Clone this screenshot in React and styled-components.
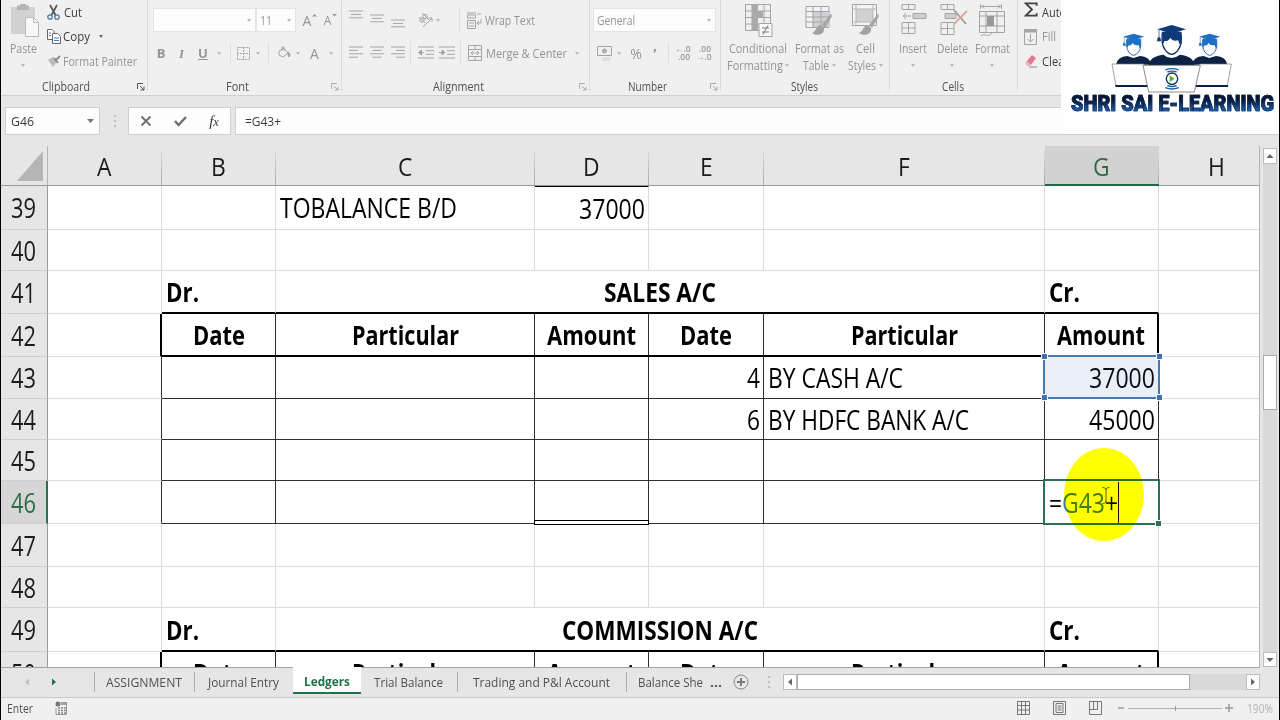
import styled, { createGlobalStyle, css } from 'styled-components';
import { useLayoutEffect, useRef, useState } from 'react';

const GlobalStyle = createGlobalStyle`
    * { box-sizing: border-box; }
    body {
        margin: 0;
        background: #000;
        overflow: hidden;
        font-family: "Open Sans", "Noto Sans", sans-serif;
    }
    svg { display: block; flex: none; }
`

const FitBox = styled.span`
    display: flex;
    flex: none;
    white-space: pre;
    margin-left: ${(props) => props.$ml || 0}px;
`

const FitInner = styled.span`
    flex: none;
    transform-origin: left center;
`

// Squeezes a line of text to a given width (or by a given ratio)
function Fit({ w, ratio = 0.85, ml, children }) {
    const ref = useRef(null);
    const [natural, setNatural] = useState(0);

    useLayoutEffect(() => {
        setNatural(parseFloat(getComputedStyle(ref.current).width));
    }, [children]);

    const width = w ?? natural * ratio;
    return (
        <FitBox $ml={ml} style={natural ? { width } : undefined}>
            <FitInner ref={ref} style={natural ? { transform: `scaleX(${width / natural})` } : undefined}>
                {children}
            </FitInner>
        </FitBox>
    );
}

const Window = styled.div`
    position: relative;
    display: flex;
    flex-direction: column;
    width: 1280px;
    height: 720px;
    border-left: 1px solid #000;
    border-right: 1px solid #000;
    background: #e6e6e6;
    overflow: hidden;
`

/* ---------- ribbon ---------- */

const Ribbon = styled.div`
    display: flex;
    flex: none;
    height: 96px;
    background: #f0f0f0;
    border-bottom: 1px solid #d0d0d0;
    font-size: 12px;
    line-height: 17px;
    color: #949494;
`

const Group = styled.section`
    display: flex;
    flex-direction: column;
    flex: none;
    width: ${(props) => props.$w}px;
    height: 95px;
    overflow: hidden;
    background: linear-gradient(#dadada, #dadada) 100% 0 / 1px 91px no-repeat;
`

const GroupBody = styled.div`
    display: flex;
    flex-direction: ${(props) => (props.$column ? 'column' : 'row')};
    flex: none;
    height: 78px;
    padding-left: ${(props) => props.$pl || 0}px;
`

const GroupFooter = styled.div`
    display: flex;
    align-items: center;
    flex: none;
    height: 17px;
    color: #505050;
    padding-left: ${(props) => props.$pl}px;
    padding-right: 3px;
`

const Launcher = styled.svg`
    margin-left: auto;
    stroke: ${(props) => (props.$on ? '#555' : '#aaa')};
`

const Stack = styled.div`
    display: flex;
    flex-direction: column;
    margin-left: ${(props) => props.$ml || 0}px;
`

const SmallButton = styled.div`
    display: flex;
    align-items: center;
    flex: none;
    height: 24.6px;
    color: ${(props) => (props.$on ? '#3c3c3c' : '#949494')};
`

const ToolRow = styled.div`
    display: flex;
    align-items: center;
    flex: none;
    height: 24px;
    margin-top: 8px;

    & + & {
        margin-top: 9px;
    }
`

const BigButton = styled.div`
    display: flex;
    flex-direction: column;
    align-items: center;
    flex: none;
    width: ${(props) => props.$w}px;
    padding-top: 4px;
    margin-left: ${(props) => props.$ml || 0}px;
`

const BigIcon = styled.div`
    height: 36px;
`

const Line = styled.div`
    display: flex;
    align-items: center;
    height: 17px;
`

const Select = styled.div`
    display: flex;
    align-items: center;
    justify-content: space-between;
    flex: none;
    width: ${(props) => props.$w}px;
    height: 24px;
    padding: 0 4px 0 3px;
    background: #fdfdfd;
    border: 1px solid #e4e4e4;
`

const CaretShape = styled.i`
    flex: none;
    width: 0;
    height: 0;
    margin-left: ${(props) => props.$ml || 0}px;
    border: 2.5px solid transparent;
    border-top: 3px solid ${(props) => (props.$on ? '#666' : '#b8b8b8')};
    border-bottom: 0;
`

const Bar = styled.i`
    flex: none;
    width: 1px;
    height: ${(props) => props.$h || 20}px;
    margin-left: ${(props) => props.$ml || 0}px;
    background: #dedede;
`

const Glyph = styled.span`
    flex: none;
    width: ${(props) => props.$w}px;
    margin-left: ${(props) => props.$ml || 0}px;
    font-size: ${(props) => props.$size || 13}px;
    font-weight: ${(props) => (props.$bold ? 700 : 400)};
    font-style: ${(props) => (props.$italic ? 'italic' : 'normal')};
    font-family: ${(props) => (props.$serif ? '"Liberation Serif", serif' : 'inherit')};
    text-decoration: ${(props) => (props.$underline ? 'underline' : 'none')};
    text-align: center;
`

const Icon = styled.svg`
    margin-left: ${(props) => props.$ml || 0}px;
    margin-top: ${(props) => props.$mt || 0}px;
    fill: none;
    stroke: #a4a4a4;
    overflow: visible;
`

const LaunchIcon = ({ on }) => (
    <Launcher $on={on} width="8" height="8" viewBox="0 0 8 8" fill="none">
        <path d="M.5 6V.5H6M3 3l4 4M7 3.5V7H3.5" />
    </Launcher>
);

const Lines = ({ rows, ml, mt }) => (
    <Icon $ml={ml} $mt={mt} width="14" height={rows.length * 3.4}>
        {rows.map(([a, b], i) => (
            <path key={i} d={`M${a} ${i * 3.4 + 1}H${b}`} />
        ))}
    </Icon>
);

const LEFT = [[0, 14], [0, 9], [0, 14], [0, 9]];
const CENTER = [[0, 14], [2.5, 11.5], [0, 14], [2.5, 11.5]];
const RIGHT = [[0, 14], [5, 14], [0, 14], [5, 14]];
const SHORT = [[0, 14], [2, 12], [0, 14]];

const IndentIcon = ({ ml, flip }) => (
    <Icon $ml={ml} width="16" height="14">
        <path d="M0 1H16M8 4.7H16M8 8.3H16M0 12H16" />
        <path d={flip ? 'M0 6.5H5M3 4l3 2.5L3 9z' : 'M6 6.5H1M3.5 4l-3 2.5 3 2.5z'} fill="#a4a4a4" />
    </Icon>
);

const Clipboard = () => (
    <Group $w={147}>
        <GroupBody $pl={3}>
            <BigButton $w={38}>
                <BigIcon>
                    <Icon $ml={4} width="28" height="34" viewBox="0 0 28 34">
                        <path d="M0 3h24v27H0z" fill="#d2d2d2" stroke="none" />
                        <path d="M6 1.5h12V6H6zM9 0h6v3H9z" fill="#b4b4b4" stroke="none" />
                        <path d="M14.5 13.5h8l5 5v14h-13z" fill="#f8f8f8" stroke="#bababa" />
                        <path d="M22.5 13.5v5h5" stroke="#bababa" />
                    </Icon>
                </BigIcon>
                <Line><Fit w={27}>Paste</Fit></Line>
                <Line><CaretShape /></Line>
            </BigButton>
            <Stack $ml={5}>
                <SmallButton $on>
                    <Icon width="13" height="15" viewBox="0 0 13 15">
                        <path d="M3 0l5.5 10M10 0L4.5 10" stroke="#555" strokeWidth="1.7" />
                        <circle cx="3" cy="12" r="2.2" stroke="#4d7aa3" strokeWidth="1.3" />
                        <circle cx="10" cy="12" r="2.2" stroke="#4d7aa3" strokeWidth="1.3" />
                    </Icon>
                    <Fit w={18} ml={4}>Cut</Fit>
                </SmallButton>
                <SmallButton $on>
                    <Icon width="14" height="15" viewBox="0 0 14 15">
                        <path d="M.5.5H5l2 2v8H.5z" fill="#fff" stroke="#666" />
                        <path d="M5.5 4.5h5l3 3v7h-8z" fill="#fff" stroke="#666" />
                        <path d="M2 4h2M2 6.5h2M7 9h5M7 11.5h5" stroke="#4d7aa3" />
                    </Icon>
                    <Fit w={27} ml={2}>Copy</Fit>
                    <CaretShape $on $ml={9} />
                </SmallButton>
                <SmallButton>
                    <Icon width="14" height="13" viewBox="0 0 14 13">
                        <path d="M1 5l5-3 4 5-4 5z" fill="#bdbdbd" stroke="none" />
                        <path d="M8 6l5-5M7 3l4 5" stroke="#8c8c8c" strokeWidth="2" />
                    </Icon>
                    <Fit w={74} ml={2}>Format Painter</Fit>
                </SmallButton>
            </Stack>
        </GroupBody>
        <GroupFooter $pl={41}><Fit w={48}>Clipboard</Fit><LaunchIcon on /></GroupFooter>
    </Group>
);

const Font = () => (
    <Group $w={194}>
        <GroupBody $pl={5} $column>
            <ToolRow>
                <Select $w={103}><span /><CaretShape /></Select>
                <Select $w={40}><Fit w={12}>11</Fit><CaretShape /></Select>
                <Glyph $ml={6} $w={10} $size={14}>A</Glyph>
                <Icon $mt={-10} width="5" height="4"><path d="M0 3.5L2.5 1 5 3.5z" fill="#999" stroke="none" /></Icon>
                <Glyph $ml={6} $w={9} $size={12}>A</Glyph>
                <Icon $mt={-10} width="5" height="4"><path d="M0 1h5L2.5 3.5z" fill="#999" stroke="none" /></Icon>
            </ToolRow>
            <ToolRow>
                <Glyph $ml={3} $w={10} $bold>B</Glyph>
                <Glyph $ml={11} $w={9} $italic $serif $bold>I</Glyph>
                <Glyph $ml={12} $w={10} $bold $underline>U</Glyph>
                <CaretShape $ml={9} />
                <Bar $ml={9} />
                <Icon $ml={6} width="13" height="13"><path d="M.5.5h12v12H.5zM6.5 0v13M0 6.5h13" strokeDasharray="2 1" /></Icon>
                <CaretShape $ml={6} />
                <Bar $ml={8} />
                <Icon $ml={8} width="14" height="14" viewBox="0 0 14 14">
                    <path d="M2 5l5-3 4 5-5 4-4-2zM5 5V1h2v4" />
                    <path d="M11 6c3 2 2 4 1 5-1-1-1-3-1-5z" fill="#a4a4a4" />
                </Icon>
                <CaretShape $ml={5} />
                <Glyph $ml={9} $w={11} $size={14}>A</Glyph>
                <CaretShape $ml={9} />
            </ToolRow>
        </GroupBody>
        <GroupFooter $pl={78}><Fit w={23}>Font</Fit><LaunchIcon /></GroupFooter>
    </Group>
);

const Alignment = () => (
    <Group $w={248}>
        <GroupBody $pl={7} $column>
            <ToolRow>
                <Lines rows={SHORT} mt={-10} />
                <Lines rows={SHORT} ml={7} mt={-2} />
                <Lines rows={SHORT} ml={7} mt={9} />
                <Icon $ml={13} width="16" height="16" viewBox="0 0 16 16">
                    <circle cx="4" cy="8" r="2.2" /><circle cx="7" cy="4.5" r="2.2" />
                    <path d="M1 5l6 6M4 1l7 7M5 15L14 6M14 6h-3.5M14 6v3.5" />
                </Icon>
                <CaretShape $ml={2} />
                <Bar $ml={19} $h={24} />
                <Icon $ml={7} width="15" height="17" viewBox="0 0 15 17">
                    <path d="M0 1h9M.5 3h8v3h-8zM.5 8.5h8v8h-8zM2 11h5M2 14h5M10 2h4M14 7v4h-4M12 9l-2 2 2 2" />
                </Icon>
                <Fit w={50} ml={3}>Wrap Text</Fit>
            </ToolRow>
            <ToolRow>
                <Lines rows={LEFT} />
                <Lines rows={CENTER} ml={7} />
                <Lines rows={RIGHT} ml={7} />
                <Bar $ml={5} $h={24} />
                <IndentIcon ml={7} />
                <IndentIcon ml={5} flip />
                <Bar $ml={5} $h={24} />
                <Icon $ml={7} width="14" height="16" viewBox="0 0 14 16">
                    <path d="M.5.5h13v15H.5zM.5 4.5h13M.5 11.5h13M7 .5v4M7 11.5v4M3 8h8M5 6L3 8l2 2M9 6l2 2-2 2" />
                </Icon>
                <Fit w={81} ml={4}>{'Merge & Center'}</Fit>
                <CaretShape $ml={8} />
            </ToolRow>
        </GroupBody>
        <GroupFooter $pl={91}><Fit w={51}>Alignment</Fit><LaunchIcon /></GroupFooter>
    </Group>
);

const Digits = styled.span`
    display: flex;
    flex-direction: column;
    flex: none;
    width: 15px;
    margin-left: ${(props) => props.$ml}px;
    font-size: 8.5px;
    font-weight: 600;
    line-height: 8px;
    text-align: right;
    white-space: nowrap;
`

const NumberGroup = () => (
    <Group $w={131}>
        <GroupBody $pl={3} $column>
            <ToolRow>
                <Select $w={123}><Fit w={38}>General</Fit><CaretShape /></Select>
            </ToolRow>
            <ToolRow>
                <Icon $ml={4} width="16" height="16" viewBox="0 0 16 16">
                    <path d="M.5 1.5h14v9H.5z" />
                    <circle cx="7.5" cy="6" r="2" fill="#b5b5b5" />
                    <path d="M6 13h8M5 15h8" stroke="#ccc" />
                </Icon>
                <CaretShape $ml={4} />
                <Glyph $ml={8} $w={14} $size={14}>%</Glyph>
                <Glyph $ml={8} $w={8} $size={15} $bold>’</Glyph>
                <Bar $ml={9} />
                <Digits $ml={6}><span>←.0</span><span>.00</span></Digits>
                <Digits $ml={6}><span>.00</span><span>→.0</span></Digits>
            </ToolRow>
        </GroupBody>
        <GroupFooter $pl={38}><Fit w={39}>Number</Fit><LaunchIcon /></GroupFooter>
    </Group>
);

const Brush = () => (
    <>
        <path d="M26 9.500L17 21l3 3 7-12z" fill="#a6a6a6" stroke="none" />
        <path d="M16 21c-5 0-4 6-9 8 6 4 13 1 12-5z" fill="#a2a2a2" stroke="none" />
    </>
);

const Styles = () => (
    <Group $w={169}>
        <GroupBody $pl={5}>
            <BigButton $w={64}>
                <BigIcon>
                    <Icon $ml={2} width="28" height="34" viewBox="0 0 28 34">
                        <path d="M.5.5h25v26H.5zM.5 7h25M.5 13.5h25M.5 20h25M7 .5v26M19 .5v26" />
                        <path d="M7 .5h6v26H7zM13 7h5v6h-5z" fill="#aaa" stroke="none" />
                        <path d="M14 19.5h13v13H14z" fill="#f8f8f8" />
                        <path d="M17 24h7M17 28h7M23 21.5l-5 9" stroke="#777" />
                    </Icon>
                </BigIcon>
                <Line><Fit w={58}>Conditional</Fit></Line>
                <Line><Fit w={56}>Formatting</Fit><CaretShape $ml={2} /></Line>
            </BigButton>
            <BigButton $w={52} $ml={3}>
                <BigIcon>
                    <Icon width="28" height="34" viewBox="0 0 28 34">
                        <path d="M1 2.5h23v21H1z" fill="#f4f4f4" />
                        <path d="M8 8h16v15H8z" fill="#d0d0d6" stroke="none" />
                        <path d="M1 7.5h23M1 13h23M1 18h23M8 2.5v21M16 2.5v21" />
                        <Brush />
                    </Icon>
                </BigIcon>
                <Line><Fit w={49}>Format as</Fit></Line>
                <Line><Fit w={26}>Table</Fit><CaretShape $ml={3} /></Line>
            </BigButton>
            <BigButton $w={40}>
                <BigIcon>
                    <Icon $ml={2} width="28" height="34" viewBox="0 0 28 34">
                        <path d="M.5.5h24v21H.5z" fill="#f4f4f4" />
                        <path d="M4 5h17v13H4z" fill="#d0d0d6" stroke="none" />
                        <path d="M.5 5h24M4 .5v21M.5 18h24M21 .5v21" stroke="#b8b8b8" />
                        <Brush />
                    </Icon>
                </BigIcon>
                <Line><Fit w={19}>Cell</Fit></Line>
                <Line><Fit w={28}>Styles</Fit><CaretShape $ml={3} /></Line>
            </BigButton>
        </GroupBody>
        <GroupFooter $pl={70}><Fit w={27}>Styles</Fit></GroupFooter>
    </Group>
);

const Cells = () => (
    <Group $w={128}>
        <GroupBody $pl={7}>
            <BigButton $w={32}>
                <BigIcon>
                    <Icon $ml={2} width="26" height="32" viewBox="0 0 26 32">
                        <path d="M1 .5h13v5H1zM7.5 .5v5M1 18.5h13v11H1zM7.5 18.5v11M1 24h13" />
                        <path d="M12 9.5h13v5H12z" fill="#cfcfcf" />
                        <path d="M10 12H2M5 9l-3 3 3 3" />
                    </Icon>
                </BigIcon>
                <Line><Fit w={28}>Insert</Fit></Line>
                <Line><CaretShape /></Line>
            </BigButton>
            <BigButton $w={34} $ml={6}>
                <BigIcon>
                    <Icon $ml={2} width="27" height="32" viewBox="0 0 27 32">
                        <path d="M1 .5h13v5H1zM7.5 .5v5M1 18.5h13v12H1zM7.5 18.5v12M1 24.5h13" />
                        <path d="M5 9.5h11v5H5z" fill="#cfcfcf" />
                        <path d="M14 6l12 14" stroke="#999" strokeWidth="1.8" />
                        <path d="M27 7L14 20" stroke="#dba9a2" strokeWidth="1.8" />
                    </Icon>
                </BigIcon>
                <Line><Fit w={31}>Delete</Fit></Line>
                <Line><CaretShape /></Line>
            </BigButton>
            <BigButton $w={38} $ml={4}>
                <BigIcon>
                    <Icon width="26" height="34" viewBox="0 0 26 34" >
                        <path d="M1.5 0v5M22.5 0v5M2 2.5h20M5 .5L3 2.5l2 2M19 .5l2 2-2 2" />
                        <path d="M.5 7.5h25v21H.5zM.5 12h25M.5 22h25M7 7.5v21M18 7.5v21" />
                        <path d="M8 12h7v10H8z" fill="#999" stroke="none" />
                        <path d="M2 32c4-4 6 3 11-3" />
                    </Icon>
                </BigIcon>
                <Line><Fit w={35}>Format</Fit></Line>
                <Line><CaretShape /></Line>
            </BigButton>
        </GroupBody>
        <GroupFooter $pl={52}><Fit w={22}>Cells</Fit></GroupFooter>
    </Group>
);

const Editing = () => (
    <Group $w={100}>
        <GroupBody $pl={6}>
            <Stack>
                <SmallButton $on>
                    <Icon $mt={-4} width="14" height="16" viewBox="0 0 14 17">
                        <path d="M13 4V1.5H1.5L8 8l-6.5 6.5H13V12" stroke="#444" strokeWidth="2" />
                    </Icon>
                    <Fit w={47} ml={4}>AutoSum</Fit>
                </SmallButton>
                <SmallButton>
                    <Icon width="13" height="16" viewBox="0 0 13 16">
                        <path d="M.5.5h12v15H.5zM.5 3h12M6.5 5v8M3.5 10l3 3 3-3" />
                        <path d="M.5.5h12v2H.5z" fill="#aaa" />
                    </Icon>
                    <Fit w={14} ml={5}>Fill</Fit>
                    <CaretShape $ml={5} />
                </SmallButton>
                <SmallButton $on>
                    <Icon width="14" height="14" viewBox="0 0 14 14">
                        <path d="M2 8l6-7 4 3-5 7z" fill="#e3798f" stroke="none" />
                        <path d="M1 9l2-2 4 4-1 1H3z" fill="#f2b9c4" stroke="none" />
                        <path d="M5 13h8" stroke="#888" />
                    </Icon>
                    <Fit w={27} ml={4}>Clear</Fit>
                </SmallButton>
            </Stack>
        </GroupBody>
    </Group>
);

/* ---------- formula bar ---------- */

const FormulaRow = styled.div`
    display: flex;
    align-items: center;
    flex: none;
    height: 50px;
    padding: 0 0 0 4px;
    font-size: 12px;
    color: #3c3c3c;
`

const Field = styled.div`
    display: flex;
    align-items: center;
    flex: ${(props) => (props.$w ? 'none' : '1')};
    width: ${(props) => props.$w}px;
    height: 28px;
    margin-left: ${(props) => props.$ml || 0}px;
    padding: 0 ${(props) => props.$pr || 0}px 0 ${(props) => props.$pl || 0}px;
    justify-content: ${(props) => (props.$between ? 'space-between' : 'flex-start')};
    background: #fdfdfd;
    border: 1px solid #cfcfcf;
`

const Dots = styled.i`
    flex: none;
    width: 2px;
    height: 12px;
    margin-left: ${(props) => props.$ml}px;
    background: repeating-linear-gradient(#bdbdbd 0 2px, transparent 2px 5px);
`

/* ---------- sheet ---------- */

const Main = styled.div`
    display: flex;
    flex: none;
    height: 521px;
`

const Sheet = styled.div`
    width: 1259px;
    flex: none;
    height: 521px;
    overflow: hidden;
    border-right: 1px solid #b4b4b4;
`

const Row = styled.div`
    display: flex;
    height: ${(props) => props.$h}px;
`

const HeadCell = styled.div`
    position: relative;
    display: flex;
    align-items: center;
    justify-content: center;
    flex: none;
    width: ${(props) => props.$w}px;
    padding-top: 1px;
    padding-right: 1px;
    font-size: 26px;
    line-height: 32px;
    color: ${(props) => (props.$active ? '#2f6b48' : '#1c1c1c')};
    background: ${(props) => (props.$active ? '#d2d2d2' : 'transparent')};
    border-bottom: ${(props) => (props.$active ? '2px solid #1f6a45' : '1px solid #9a9a9a')};

    &::after {
        content: '';
        position: absolute;
        right: 0;
        top: 5px;
        bottom: 0;
        width: 1px;
        background: linear-gradient(#dadada, #a8a8a8);
    }
`

const RowHead = styled.div`
    display: flex;
    align-items: center;
    justify-content: center;
    flex: none;
    width: 47px;
    padding: 1px 1px 0 0;
    font-size: 26.5px;
    line-height: 32px;
    color: ${(props) => (props.$active ? '#2f6b48' : '#1c1c1c')};
    background: ${(props) => (props.$active ? '#d6d6d6' : '#e6e6e6')};
    border-right: ${(props) => (props.$active ? '2px solid #2b7350' : '1px solid #9a9a9a')};
    border-bottom: 1px solid #cfcfcf;
    overflow: hidden;
`

const edge = (v) => (v === 2 ? '2px solid #000' : v === 1 ? '1px solid #2e2e2e' : v === 'none' ? '0' : '1px solid #dcdcdc')

const Cell = styled.div`
    position: relative;
    display: flex;
    align-items: center;
    flex: none;
    justify-content: ${(props) => props.$align || 'flex-start'};
    width: ${(props) => props.$w}px;
    padding: 1px ${(props) => (props.$align === 'end' ? 3 : 4)}px 0 4px;
    background: #fff;
    border-right: ${(props) => edge(props.$right)};
    border-bottom: ${(props) => edge(props.$bottom)};
    font-size: 27px;
    line-height: 36px;
    font-weight: ${(props) => (props.$bold ? 700 : 400)};
    color: #000;
    ${(props) => props.$topped && css`border-top: 1px solid #000;`}
    ${(props) => props.$double && css`
        &::after {
            content: '';
            position: absolute;
            left: -1px;
            right: -1px;
            bottom: -2px;
            height: 3px;
            z-index: 1;
            background: #fff;
            border: 1px solid #000;
        }
    `}
`

const RangeBox = styled.div`
    position: absolute;
    left: -2px;
    right: -2px;
    top: -2px;
    bottom: -1px;
    z-index: 2;
    border: 2px solid #4579b4;
    background: rgba(68, 125, 196, 0.12);
`

const Knob = styled.i`
    position: absolute;
    width: 5px;
    height: 5px;
    background: #3b73b4;
    outline: 1px solid #fff;
    ${(props) => (props.$r ? 'right: -4px;' : 'left: -3px;')}
    ${(props) => (props.$b ? 'bottom: -3px;' : 'top: -3px;')}
`

const EditBox = styled.div`
    position: absolute;
    left: -2px;
    right: -2px;
    top: -2px;
    bottom: -2px;
    z-index: 2;
    border: 2px solid #2b7350;

    &::after {
        content: '';
        position: absolute;
        right: -3px;
        bottom: -3px;
        width: 5px;
        height: 5px;
        background: #2b7350;
        border: solid #fff;
        border-width: 1px 0 0 1px;
    }
`

const Ref = styled.span`
    color: #3f7fb8;
`

const TextCaret = styled.i`
    align-self: stretch;
    width: 1px;
    background: #111;
`

const Spot = styled.div`
    position: absolute;
    left: 19px;
    top: -33px;
    width: 80px;
    height: 93px;
    z-index: 3;
    border-radius: 50%;
    background: #ffff00;
    mix-blend-mode: multiply;
    filter: blur(0.7px);
`

const Beam = styled.svg`
    position: absolute;
    left: 57px;
    top: 6px;
    z-index: 4;
    fill: none;
    stroke: #6b5a12;
`

const COLS = { A: 114, B: 114, C: 259, D: 114, E: 115, F: 281, G: 114, H: 115 };
const LETTERS = Object.keys(COLS);
const HEADS = { B: ['Date', 52], C: ['Particular', 107], D: ['Amount', 89], E: ['Date', 52], F: ['Particular', 107], G: ['Amount', 88] };

const ROWS = [
    { n: 39, h: 44, values: { C: ['TOBALANCE B/D', 177], D: ['37000', 66, 'end'] } },
    { n: 40, h: 41 },
    { n: 41, h: 43, title: ['SALES A/C', 112] },
    { n: 42, h: 43, heads: true },
    { n: 43, h: 42, boxed: true, values: { E: ['4', 13, 'end'], F: ['BY CASH A/C', 135], G: ['37000', 66, 'end'] } },
    { n: 44, h: 41, boxed: true, values: { E: ['6', 13, 'end'], F: ['BY HDFC BANK A/C', 201], G: ['45000', 66, 'end'] } },
    { n: 45, h: 41, boxed: true },
    { n: 46, h: 43, boxed: true },
    { n: 47, h: 43 },
    { n: 48, h: 41 },
    { n: 49, h: 44, title: ['COMMISSION A/C', 196] },
    { n: 50, h: 43, heads: true },
];

function TitleRow({ title }) {
    return (
        <>
            <Cell $w={COLS.A} />
            <Cell $w={COLS.B} $bottom={2} $bold><Fit w={33}>Dr.</Fit></Cell>
            <Cell $w={COLS.C + COLS.D + COLS.E + COLS.F} $bottom={2} $bold $align="center">
                <Fit w={title[1]}>{title[0]}</Fit>
            </Cell>
            <Cell $w={COLS.G} $bottom={2} $bold><Fit w={31}>Cr.</Fit></Cell>
            <Cell $w={COLS.H} $right="none" />
        </>
    );
}

function DataCell({ row, col }) {
    const inside = col !== 'A' && col !== 'H';
    const framed = row.heads || row.boxed;
    const value = row.heads ? HEADS[col] : row.values?.[col];
    let right;
    if (col === 'H') right = 'none';
    else if (framed) right = row.heads && (col === 'A' || col === 'G') ? 2 : 1;
    const bottom = framed && inside ? (row.heads ? 2 : 1) : undefined;

    return (
        <Cell
            $w={COLS[col]}
            $right={right}
            $bottom={bottom}
            $bold={row.heads}
            $align={row.heads ? 'center' : value?.[2]}
            $topped={row.n === 39 && col === 'D'}
            $double={row.n === 46 && col === 'D'}
        >
            {value && <Fit w={value[1]}>{value[0]}</Fit>}
            {row.n === 43 && col === 'G' && (
                <RangeBox><Knob /><Knob $r /><Knob $b /><Knob $r $b /></RangeBox>
            )}
            {row.n === 46 && col === 'G' && (
                <>
                    <Fit w={69}>=<Ref>G43</Ref>+</Fit>
                    <TextCaret />
                    <EditBox />
                    <Spot />
                    <Beam width="8" height="17"><path d="M.5.5C3 .5 4 1.5 4 3v11c0 1.5-1 2.5-3.5 2.5M7.5.5C5 .5 4 1.5 4 3M4 14c0 1.5 1 2.5 3.5 2.5" /></Beam>
                </>
            )}
        </Cell>
    );
}

const Corner = styled.div`
    display: flex;
    justify-content: flex-end;
    align-items: flex-end;
    flex: none;
    width: 47px;
    padding: 0 3px 4px 0;
    border-right: 1px solid #b5b5b5;
    border-bottom: 1px solid #9a9a9a;
`

const VScroll = styled.div`
    display: flex;
    flex-direction: column;
    width: 14px;
    margin: 2px 0 0 3px;
    background: #d9d9d9;
`

const ScrollButton = styled.div`
    display: flex;
    align-items: center;
    justify-content: center;
    flex: none;
    width: 14px;
    height: ${(props) => props.$h}px;
    background: #fff;
    border: 1px solid #bdbdbd;
`

const Thumb = styled.div`
    flex: none;
    width: ${(props) => props.$w || 14}px;
    height: ${(props) => props.$h}px;
    margin-top: ${(props) => props.$mt || 0}px;
    margin-bottom: ${(props) => (props.$mt ? 'auto' : 0)};
    background: #fff;
    border: 1px solid #ababab;
`

const Arrow = styled.svg`
    transform: rotate(${(props) => props.$deg || 0}deg);
    margin-left: ${(props) => props.$ml || 0}px;
`

const ArrowIcon = ({ deg, ml, fill = '#666' }) => (
    <Arrow $deg={deg} $ml={ml} width="8" height="8"><path d="M.5 6L4 2l3.5 4z" fill={fill} /></Arrow>
);

/* ---------- tabs and status ---------- */

const TabBar = styled.div`
    display: flex;
    align-items: center;
    flex: none;
    height: 31px;
    font-size: 13px;
    line-height: 18px;
    color: #505050;
    border-bottom: 1px solid #c9c9c9;
    background: linear-gradient(#a2a2a2, #a2a2a2) 0 0 / 1259px 1px no-repeat;
`

const Tab = styled.div`
    display: flex;
    align-items: center;
    justify-content: center;
    flex: none;
    width: ${(props) => props.$w}px;
    height: 20px;
    padding: 0 2px 1px 0;
    border-right: ${(props) => (props.$last ? 0 : 1)}px solid #adadad;
`

const ActiveTab = styled.div`
    display: flex;
    align-items: center;
    justify-content: center;
    align-self: flex-start;
    flex: none;
    width: 68px;
    height: 27px;
    padding-top: 2px;
    margin-left: -1px;
    background: #fff;
    border-bottom: 2px solid #217346;
    font-weight: 700;
    color: #217346;
`

const TabNav = styled.div`
    display: flex;
    align-items: center;
    width: 94px;
    height: 20px;
    padding-left: 22px;
    border-right: 1px solid #adadad;
`

const HScroll = styled.div`
    display: flex;
    align-items: center;
    width: 477px;
    height: 16px;
    margin-left: 13px;
    background: #d9d9d9;
    & > :last-child { margin-left: auto; }
`

const StatusBar = styled.div`
    display: flex;
    align-items: center;
    flex: 1;
    padding: 0 0 2px 6px;
    background: #f0f0f0;
    font-size: 12px;
    color: #505050;
`

const ZoomTrack = styled.i`
    display: flex;
    justify-content: center;
    align-items: center;
    flex: none;
    width: 94px;
    height: 1px;
    margin: 0 3px 0 4px;
    background: #b0b0b0;

    &::before {
        content: '';
        flex: none;
        width: 1px;
        height: 5px;
        background: #999;
    }
`

const ZoomValue = styled.div`
    margin-left: 14px;
    color: #b4b4b4;
`

/* ---------- channel logo ---------- */

const Logo = styled.div`
    position: absolute;
    left: 1060px;
    top: 0;
    width: 218px;
    height: 134px;
    z-index: 5;
    background: #fefefe;
`

const LogoName = styled.div`
    display: flex;
    padding-left: 10px;
    margin-top: -1px;
    font-family: Roboto, "Open Sans", sans-serif;
    font-size: 22.5px;
    line-height: 22px;
    font-weight: 900;
    -webkit-text-stroke: 0.7px #0b2550;

    span span {
        color: transparent;
        background: linear-gradient(#071633 35%, #1b62b5 85%);
        -webkit-background-clip: text;
        background-clip: text;
    }
`

const Student = ({ x, y, s, fill, dark }) => (
    <g transform={`translate(${x} ${y}) scale(${s})`}>
        <path d="M-28 24q-4 34 8 50q20 28 40 0q12-16 8-50z" fill="#fff" stroke={dark} strokeWidth="4" />
        <path d="M-28 20h56l2 36q-8 6-10-10q-18 4-24-8q-6 12-18 10q-2 10-6 6z" fill={fill} />
        <path d="M0 0l43 13-43 13-43-13z" fill={fill} />
        <path d="M-38 14v24M-41 38h6l2 10h-10z" fill={fill} stroke={fill} strokeWidth="2" />
    </g>
);

const LogoArt = () => (
    <svg width="218" height="93" viewBox="123 0 654 279">
        <path d="M288 194q4-24 34-26l18 6 20-6q30 2 34 26zM516 194q4-24 34-26l18 6 20-6q30 2 34 26z" fill="#0c2346" />
        <path d="M386 196q4-28 44-32q24 20 50 0q40 4 44 32z" fill="#0b2145" />
        <Student x={341} y={101} s={0.74} fill="#1f6fc4" dark="#2469ad" />
        <Student x={569} y={101} s={0.74} fill="#1f6fc4" dark="#2469ad" />
        <Student x={455} y={75} s={1} fill="#0d3a78" dark="#0d2f60" />
        <path d="M276 192h96l14 66h-98zM634 192h-96l-14 66h98z" fill="#fefefe" stroke="#777" strokeWidth="2" />
        <path d="M286 258h98M526 258h98" stroke="#0b2145" strokeWidth="6" />
        <path d="M369 196h172l-18 80H386z" fill="#fefefe" stroke="#777" strokeWidth="2.5" />
        <circle cx="456" cy="236" r="17" fill="none" stroke="#0d2f60" strokeWidth="4" />
        <path d="M449 226l15 10-15 10z" fill="#53b32b" />
        <path d="M436 210q20-8 40 0M442 216q14-5 28 0M436 263q20 8 40 0M442 257q14 5 28 0" fill="none" stroke="#1c5ca0" strokeWidth="4" />
    </svg>
);

export default function App() {
    return (
        <Window>
            <GlobalStyle />
            <Ribbon>
                <Clipboard />
                <Font />
                <Alignment />
                <NumberGroup />
                <Styles />
                <Cells />
                <Editing />
            </Ribbon>

            <FormulaRow>
                <Field $w={95} $pl={5} $pr={5} $between>
                    <Fit w={23}>G46</Fit>
                    <Icon width="7" height="4"><path d="M0 0h7L3.5 4z" fill="#777" stroke="none" /></Icon>
                </Field>
                <Dots $ml={14} />
                <Field $ml={12} $w={103} $pl={12}>
                    <Icon width="10" height="10"><path d="M.5.5l9 9M9.5.5l-9 9" stroke="#6e6e6e" strokeWidth="1.8" /></Icon>
                    <Icon $ml={23} width="13" height="10"><path d="M1 5l3.5 4L12 1" stroke="#6e6e6e" strokeWidth="2.4" /></Icon>
                    <Glyph $ml={21} $w={12} $size={15} $serif $italic>f<small>x</small></Glyph>
                </Field>
                <Field $ml={4} $pl={9}><Fit w={36}>=G43+</Fit></Field>
            </FormulaRow>

            <Main>
                <Sheet>
                    <Row $h={40}>
                        <Corner><svg width="27" height="30"><path d="M26 0v30H0z" fill="#b5b5b5" /></svg></Corner>
                        {LETTERS.map((col) => (
                            <HeadCell key={col} $w={COLS[col]} $active={col === 'G'}>
                                <Fit ratio={0.88}>{col}</Fit>
                            </HeadCell>
                        ))}
                    </Row>
                    {ROWS.map((row) => (
                        <Row key={row.n} $h={row.h}>
                            <RowHead $active={row.n === 46}><Fit w={25}>{String(row.n)}</Fit></RowHead>
                            {row.title
                                ? <TitleRow title={row.title} />
                                : LETTERS.map((col) => <DataCell key={col} row={row} col={col} />)}
                        </Row>
                    ))}
                </Sheet>
                <VScroll>
                    <ScrollButton $h={16}><ArrowIcon /></ScrollButton>
                    <Thumb $h={55} $mt={191} />
                    <ScrollButton $h={15}><ArrowIcon deg={180} /></ScrollButton>
                </VScroll>
            </Main>

            <TabBar>
                <TabNav>
                    <ArrowIcon deg={-90} fill="#c0c0c0" />
                    <ArrowIcon deg={90} ml={19} fill="#217346" />
                </TabNav>
                <Tab $w={100}><Fit w={76}>ASSIGNMENT</Fit></Tab>
                <Tab $w={99}><Fit w={71}>Journal Entry</Fit></Tab>
                <ActiveTab><Fit w={46}>Ledgers</Fit></ActiveTab>
                <Tab $w={97}><Fit w={69}>Trial Balance</Fit></Tab>
                <Tab $w={169}><Fit w={137}>{'Trading and P&l Account'}</Fit></Tab>
                <Tab $w={106} $last><Fit w={65} ml={2}>Balance She</Fit><Fit w={12} ml={7}><b>...</b></Fit></Tab>
                <Icon width="16" height="16"><circle cx="8" cy="8" r="7" stroke="#888" /><path d="M4 8h8M8 4v8" stroke="#777" strokeWidth="1.8" /></Icon>
                <Dots $ml={19} />
                <HScroll>
                    <ScrollButton $h={16}><ArrowIcon deg={-90} /></ScrollButton>
                    <Thumb $w={393} $h={16} />
                    <ScrollButton $h={16}><ArrowIcon deg={90} /></ScrollButton>
                </HScroll>
            </TabBar>

            <StatusBar>
                <Fit w={26}>Enter</Fit>
                <Icon $ml={22} width="12" height="14" viewBox="0 0 12 14">
                    <circle cx="3" cy="3" r="2.5" fill="#777" stroke="none" />
                    <path d="M6 1.5h5.5v12H1V7" stroke="#999" />
                    <path d="M6 3h6M3 7h2M6 7h2M9 7h2M3 9.5h2M6 9.5h2M9 9.5h2M3 12h2M6 12h2M9 12h2" stroke="#888" strokeWidth="1.5" />
                </Icon>
                <Icon $ml={950} width="13" height="14"><path d="M.5.5h12v13H.5zM.5 4.5h12M.5 9h12M4.5.5v13M8.5.5v13" stroke="#777" /></Icon>
                <Icon $ml={23} width="13" height="14"><path d="M.5.5h12v13H.5zM3 2.5h7v9H3zM4.5 5h4M4.5 7h4M4.5 9h4" stroke="#777" /></Icon>
                <Icon $ml={23} width="13" height="14"><path d="M.5.5h12v13H.5zM4.5.5v8M8.5.5v8H.5" stroke="#777" /></Icon>
                <Icon $ml={16} width="6" height="8"><path d="M0 4h6" stroke="#999" strokeWidth="1.5" /></Icon>
                <ZoomTrack />
                <Icon width="8" height="8"><path d="M0 4h8M4 0v8" stroke="#999" strokeWidth="1.5" /></Icon>
                <ZoomValue><Fit w={26}>190%</Fit></ZoomValue>
            </StatusBar>

            <Logo>
                <LogoArt />
                <LogoName><Fit w={203}>SHRI SAI E-LEARNING</Fit></LogoName>
            </Logo>
        </Window>
    );
}
